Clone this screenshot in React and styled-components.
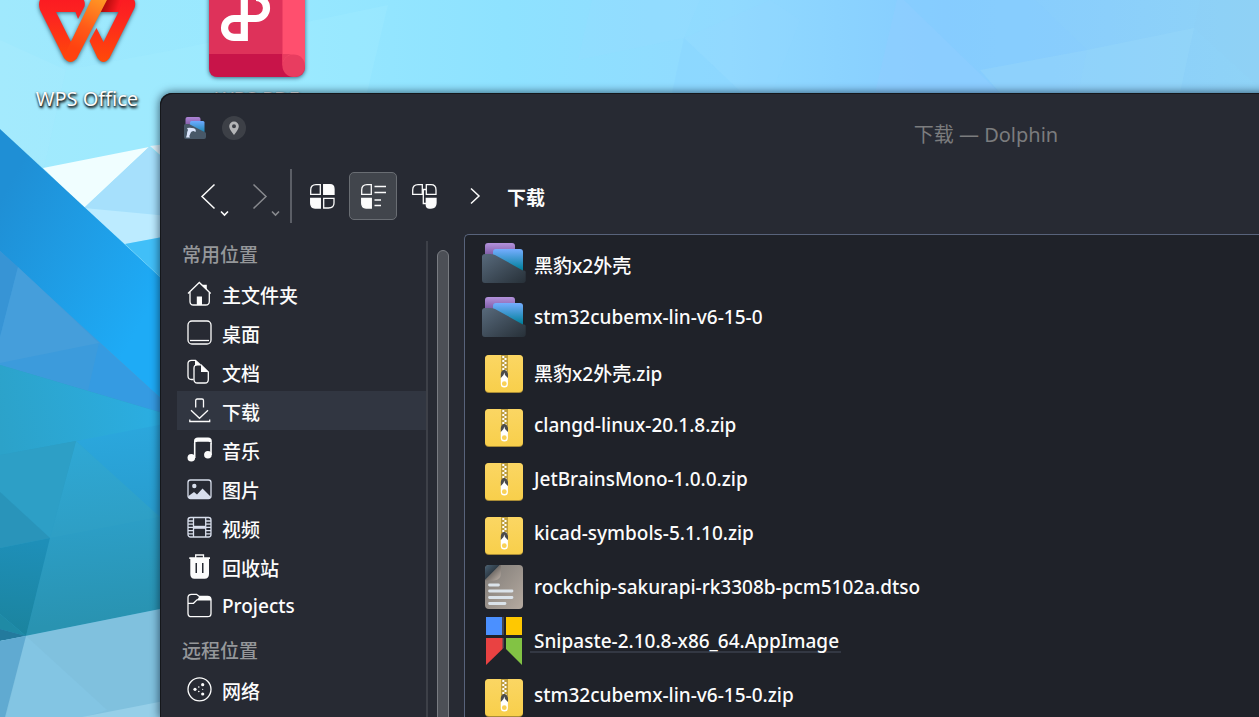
import React from "react";
import styled, { createGlobalStyle } from "styled-components";

const GlobalStyle = createGlobalStyle`
  *, *::before, *::after { box-sizing: border-box; }
  body {
    margin: 0;
    font-family: "Noto Sans", "Noto Sans CJK SC", sans-serif;
    font-size: 20px;
    line-height: 24px;
    color: #fcfcfc;
  }
  ul { list-style: none; margin: 0; padding: 0; }
  button { font: inherit; color: inherit; padding: 0; margin: 0; cursor: default; }
  svg { display: block; flex: none; }
`;

/* ---------- desktop ---------- */

const Desktop = styled.main`
  position: relative;
  height: 100vh;
  overflow: hidden;
  background: #8fdfff;
`;

const WallpaperArt = styled.svg`
  position: absolute;
  left: 0;
  top: 0;
`;

const Shortcuts = styled.ul`
  position: absolute;
  left: 2px;
  top: -20px;
  display: flex;
`;

const Shortcut = styled.li`
  width: 170px;
  display: flex;
  flex-direction: column;
  align-items: center;
  gap: 7px;
`;

const ShortcutArt = styled.svg`
  overflow: visible;
  filter: drop-shadow(0 1px 2px rgba(0, 40, 60, 0.65));
`;

const ShortcutLabel = styled.span`
  text-shadow: 1px 2px 3px #000, 0 1px 2px rgba(0, 0, 0, 0.8);
`;

/* ---------- window ---------- */

const Window = styled.section`
  position: absolute;
  left: 160px;
  top: 93px;
  right: -553px;
  bottom: 0;
  display: flex;
  flex-direction: column;
  background: #272a33;
  border-radius: 12px 0 0 0;
  box-shadow: inset 1px 1px 0 #15171b, 0 0 8px 1px rgba(0, 20, 40, 0.6);
`;

const TitleBar = styled.header`
  display: grid;
  grid-template-columns: 1fr auto 1fr;
  align-items: center;
  height: 70px;
  padding: 0 22px;
`;

const TitleIcons = styled.div`
  display: flex;
  align-items: center;
  gap: 16px;
`;

const Title = styled.h1`
  margin: 14px 0 0;
  font-size: 20px;
  font-weight: 400;
  color: #7b7c7e;
`;

const PinButton = styled.button`
  width: 24px;
  height: 24px;
  border: 0;
  border-radius: 50%;
  background: #3d4047;
  display: grid;
  place-items: center;
`;

const ToolBar = styled.div`
  display: flex;
  align-items: center;
  height: 66px;
  padding-left: 24px;
`;

const NavButton = styled.button`
  width: 51px;
  height: 48px;
  border: 0;
  background: none;
  opacity: ${(p) => (p.disabled ? 0.45 : 1)};
  &&& { color: #fcfcfc; }
`;

const Divider = styled.span`
  width: 2px;
  height: 54px;
  margin: 0 6px 0 4px;
  background: #5b5e66;
`;

const ViewModes = styled.div`
  display: flex;
  gap: 3px;
`;

const ViewButton = styled.button`
  width: 48px;
  height: 48px;
  display: grid;
  place-items: center;
  border: 1px solid ${(p) => (p.$active ? "#696d73" : "transparent")};
  border-radius: 5px;
  background: ${(p) => (p.$active ? "#41454c" : "none")};
`;

const Breadcrumb = styled.nav`
  display: flex;
  align-items: center;
  gap: 24px;
  padding: 2px 0 0 19px;
`;

const Crumb = styled.a`
  color: inherit;
  text-decoration: none;
  font-size: 19px;
  font-weight: 700;
  padding-top: 2px;
`;

const Body = styled.div`
  flex: 1;
  min-height: 0;
  display: flex;
  padding-top: 5px;
  font-size: 19px;
  font-weight: 500;
`;

/* ---------- places ---------- */

const Places = styled.nav`
  width: 266px;
  padding: 1px 0 0 17px;
  overflow: hidden;
`;

const PlacesGroup = styled.section`
  & + & { margin-top: 6px; }
`;

const PlacesHeading = styled.h2`
  margin: 0;
  padding: 0 5px;
  font-size: 19px;
  line-height: 40px;
  height: 39px;
  font-weight: 500;
  color: #95979a;
`;

const Place = styled.a`
  display: flex;
  align-items: center;
  gap: 9px;
  height: 39px;
  padding: 0 0 0 9px;
  color: #fcfcfc;
  text-decoration: none;
  background: ${(p) => (p.$current ? "#313641" : "none")};
`;

const PlaceLabel = styled.span`
  padding-top: ${(p) => (p.$latin ? 0 : 4)}px;
`;

const Gutter = styled.div`
  width: 38px;
  margin-top: 7px;
  padding: 9px 0 0 9px;
  border-left: 2px solid #3d4048;
  overflow: hidden;
`;

const ScrollThumb = styled.div`
  width: 12px;
  height: calc(100% + 20px);
  border: 1px solid #797c82;
  border-radius: 6px;
  background: #4c4f56;
`;

/* ---------- files ---------- */

const FilePanel = styled.div`
  flex: 1;
  overflow: hidden;
  padding: 1px 0 0 15px;
  background: #1f2229;
  border: 1px solid #58637b;
  border-right: 0;
  border-bottom: 0;
  border-radius: 5px 0 0 0;
`;

const FileRow = styled.li`
  display: flex;
  align-items: center;
  gap: 2px;
  height: 54px;
`;

const FileName = styled.span`
  line-height: 20px;
  padding: 0 2px 0 4px;
  border: solid transparent;
  border-width: 2px 0;
  border-bottom-color: ${(p) => (p.$marked ? "#333843" : "transparent")};
  margin-top: ${(p) => (p.$cjk ? 6 : 0)}px;
`;

/* ---------- drawings ---------- */

const Wallpaper = () => (
  <WallpaperArt width="1920" height="1080" viewBox="0 0 1920 1080" aria-hidden="true">
    <defs>
      <linearGradient id="sky" gradientUnits="userSpaceOnUse" x1="0" y1="0" x2="1259" y2="0">
        <stop offset="0" stopColor="#a0e9fd" />
        <stop offset="0.22" stopColor="#98e8ff" />
        <stop offset="0.4" stopColor="#8ee2ff" />
        <stop offset="0.58" stopColor="#91daff" />
        <stop offset="0.75" stopColor="#85ccff" />
        <stop offset="0.88" stopColor="#8bcffb" />
        <stop offset="1" stopColor="#8fd3f6" />
      </linearGradient>
      <linearGradient id="blue" gradientUnits="userSpaceOnUse" x1="0" y1="200" x2="160" y2="290">
        <stop offset="0" stopColor="#1f8fd5" />
        <stop offset="1" stopColor="#1eabf6" />
      </linearGradient>
      <linearGradient id="tealTop" gradientUnits="userSpaceOnUse" x1="0" y1="440" x2="160" y2="410">
        <stop offset="0" stopColor="#2ca2c9" />
        <stop offset="1" stopColor="#2baee2" />
      </linearGradient>
      <linearGradient id="tealRight" gradientUnits="userSpaceOnUse" x1="140" y1="425" x2="150" y2="510">
        <stop offset="0" stopColor="#2ba7dd" />
        <stop offset="1" stopColor="#289dcf" />
      </linearGradient>
      <linearGradient id="tealMid" gradientUnits="userSpaceOnUse" x1="80" y1="441" x2="90" y2="530">
        <stop offset="0" stopColor="#2fa8d5" />
        <stop offset="1" stopColor="#2e9fc5" />
      </linearGradient>
      <linearGradient id="tealLow" gradientUnits="userSpaceOnUse" x1="100" y1="525" x2="110" y2="620">
        <stop offset="0" stopColor="#2c9ec6" />
        <stop offset="1" stopColor="#2993b1" />
      </linearGradient>
      <linearGradient id="tealDark" gradientUnits="userSpaceOnUse" x1="30" y1="542" x2="20" y2="632">
        <stop offset="0" stopColor="#1e8fb8" />
        <stop offset="1" stopColor="#1b849f" />
      </linearGradient>
    </defs>
    <rect width="1920" height="1080" fill="url(#sky)" />
    <path d="M0 40 L0 129 L44 168 L66 70Z" fill="#fff" opacity=".05" />
    <path d="M66 70 L173 50 L388 5 L367 93 L160 145 L44 168Z" fill="#a8f0ff" opacity=".25" />
    <path d="M578 60 L592 0 L700 0 L684 38Z" fill="#9adaff" opacity=".2" />
    <path d="M684 38 L672 93 L742 93Z" fill="#84d2ff" opacity=".3" />
    <path d="M684 38 L770 0 L800 20 L772 93 L742 93Z" fill="#98d8ff" opacity=".2" />
    <path d="M897 0 L875 93 L1000 93 L904 0Z" fill="#90cdff" opacity=".6" />
    <path d="M904 0 L1000 93 L1078 93 L1087 50 L1035 0Z" fill="#86ccff" opacity=".4" />
    <path d="M980 70 L1087 50 L1194 28 L1180 93 L1000 93Z" fill="#9bdbfa" opacity=".35" />
    <path d="M1194 28 L1259 88 L1259 0 L1200 0Z" fill="#8ed0f4" opacity=".4" />

    <path d="M43 168 L149 147 L84 208Z" fill="#f0feff" />
    <path d="M149 147 L200 190 L200 220 L84 208Z" fill="#a6e0fc" />
    <path d="M150 146 L200 140 L200 190Z" fill="#e4f5fc" />
    <path d="M84 208 L200 219 L200 230 L125 244Z" fill="#bcebff" />
    <path d="M125 244 L200 230 L200 314Z" fill="#41bff8" />
    <path d="M0 240 L200 420 L200 450 L0 390Z" fill="#3c9bdc" />
    <path d="M0 129 L200 314 L200 434 L0 251Z" fill="url(#blue)" />
    <path d="M0 251 L18 267 L0 337Z" fill="#3794d5" />
    <path d="M18 267 L99 343 L0 363 L0 337Z" fill="#459edb" />
    <path d="M99 343 L200 434 L200 424 L88 391Z" fill="#359be2" />
    <path d="M0 365 L200 424 L200 640 L0 640Z" fill="#2c9ec6" />
    <path d="M0 365 L200 424 L76 441 L0 455Z" fill="url(#tealTop)" />
    <path d="M76 441 L200 417 L200 555Z" fill="url(#tealRight)" />
    <path d="M76 441 L160 517 L50 538Z" fill="url(#tealMid)" />
    <path d="M0 455 L76 441 L50 538 L0 492Z" fill="#2d9fc6" />
    <path d="M0 492 L50 538 L0 548Z" fill="#2994ba" />
    <path d="M50 538 L200 509 L200 601 L26 636Z" fill="url(#tealLow)" />
    <path d="M0 548 L50 538 L26 636 L0 614Z" fill="url(#tealDark)" />
    <path d="M0 614 L26 636 L0 629Z" fill="#1f8aa5" />
    <path d="M0 629 L26 636 L0 641Z" fill="#237a9d" />
    <path d="M0 641 L200 601 L200 800 L0 800Z" fill="#80c1de" />
    <path d="M26 636 L107 710 L76 720 L5 720Z" fill="#88caea" opacity=".4" />
    <path d="M0 641 L26 636 L5 717 L0 740Z" fill="#60aad1" />
    <path d="M82 717 L200 694 L200 760 L82 760Z" fill="#96cfe8" />
  </WallpaperArt>
);

const WpsLogo = () => (
  <ShortcutArt width="102" height="100" viewBox="36 -20 102 100" aria-hidden="true">
    <defs>
      <linearGradient id="wr" x1="0" y1="0" x2="0" y2="1">
        <stop offset="0" stopColor="#fb1a22" />
        <stop offset=".3" stopColor="#fd2420" />
        <stop offset="1" stopColor="#ff4a08" />
      </linearGradient>
      <linearGradient id="wo" gradientUnits="userSpaceOnUse" x1="100" y1="-4" x2="74" y2="48">
        <stop offset="0" stopColor="#ff9a25" />
        <stop offset=".6" stopColor="#ff5a18" />
        <stop offset="1" stopColor="#ff4210" />
      </linearGradient>
      <linearGradient id="wd" gradientUnits="userSpaceOnUse" x1="103" y1="3" x2="118" y2="8">
        <stop offset="0" stopColor="#a80909" />
        <stop offset="1" stopColor="#fc1b22" />
      </linearGradient>
    </defs>
    <path d="M43 -4 H80 Q86 0 84.500 6.500 L78 19 L75.500 12 H56 L71 42 L77 58 Q70.500 66 64 58 L40 10 Q37 1 43 -4Z" fill="url(#wr)" />
    <path d="M96.500 28 L103.500 42 L118.500 12 H100 L107 -4 H131 Q137 1 134.500 8 L109.500 58 Q103.500 66 97.500 58 L89.500 41Z" fill="url(#wr)" />
    <path d="M107 -4 H124 L118.500 12 H100Z" fill="url(#wd)" />
    <path d="M93 -4 H109 L77 58 Q73 62 70 59 L64 56Z" fill="url(#wo)" />
  </ShortcutArt>
);

const PdfLogo = () => (
  <ShortcutArt width="98" height="100" viewBox="208 -20 98 100" aria-hidden="true">
    <rect x="209" y="-19" width="96" height="96" rx="9" fill="#de325a" />
    <path d="M209 54 H294 V77 H218 Q209 77 209 68Z" fill="#c81449" />
    <path d="M282.500 -19 H296 Q305 -19 305 -10 V65.500 H282.500Z" fill="#ff4f6e" />
    <circle cx="293.700" cy="65.700" r="11.300" fill="#e83d60" />
    <path d="M282.500 54 H294 A11.300 11.300 0 0 0 282.500 65.700Z" fill="#e83d60" />
    <path d="M244.300 -15 V41 M244.300 18.500 H256 A10.500 10.500 0 0 0 256 -2.500 M244.300 18.500 H234 A9.400 9.400 0 0 0 234 37.400 H244.300" fill="none" stroke="#fff" strokeWidth="7.200" />
  </ShortcutArt>
);

const DolphinIcon = () => (
  <svg width="24" height="24" viewBox="0 0 24 24" aria-hidden="true">
    <defs>
      <linearGradient id="dp" x1="0" y1="0" x2="0" y2="1"><stop stopColor="#ad84d6" /><stop offset="1" stopColor="#77549c" /></linearGradient>
      <linearGradient id="db" x1="0" y1="0" x2="0" y2="1"><stop stopColor="#6eaaff" /><stop offset="1" stopColor="#007c99" /></linearGradient>
    </defs>
    <rect x="3.500" y="1" width="15" height="10" rx="2" fill="url(#dp)" />
    <rect x="8" y="5" width="14.500" height="15" rx="1.500" fill="url(#db)" />
    <path d="M2 9.500 Q2 8 3.500 8 L7 8 L22.500 16 Q24 16 24 17.500 V21 Q24 23 22 23 H4 Q2 23 2 21Z" fill="#485868" />
    <path d="M5 12 Q8 11.500 12 12.200 Q14.500 13.500 13.500 16 L11.500 15 Q9.500 15 8.800 16.500 L7.300 20 L8 21.500 H4 Q5 20 5.200 16 L6 14Z" fill="#dbe5fb" />
  </svg>
);

const Pin = () => (
  <svg width="12" height="16" viewBox="0 0 12 16" aria-hidden="true">
    <path fillRule="evenodd" fill="#b4b5b7" d="M6 1.500 A4.800 4.800 0 0 1 10.800 6.300 Q10.800 9.300 6 15 Q1.200 9.300 1.200 6.300 A4.800 4.800 0 0 1 6 1.500Z M6 4.300 a2 2 0 1 0 0 4 a2 2 0 1 0 0-4Z" />
  </svg>
);

const Arrow = ({ forward }) => (
  <svg width="51" height="48" viewBox="0 0 51 48" fill="none" stroke="currentColor" aria-hidden="true">
    <path d={forward ? "M18.500 12.500 L31 24.500 L18.500 36.500" : "M30.500 12.500 L18 24.500 L30.500 36.500"} strokeWidth="1.500" />
    <path d="M37 39.500 L40.500 43 L44 39.500" strokeWidth="1.600" />
  </svg>
);

const viewShapes = {
  icons: (
    <>
      <path d="M1.700 11.300 V7 Q1.700 1.700 7 1.700 H11.300 V11.300Z" />
      <path d="M14.700 1.700 H21 Q25 1.700 25 6 V11.300 H14.700Z" fill="currentColor" />
      <path d="M1.700 15.300 H11.300 V25 H6 Q1.700 25 1.700 20Z" fill="currentColor" />
      <path d="M14.700 15.300 H25 V20 Q25 25 19.500 25 H14.700Z" />
    </>
  ),
  details: (
    <>
      <path d="M1.700 11.300 V7 Q1.700 1.700 7 1.700 H11.300 V11.300Z" />
      <path d="M1.700 15.300 H11.300 V25 H6 Q1.700 25 1.700 20Z" fill="currentColor" />
      <path d="M14.500 3.500 H26 M14.500 9.500 H26 M14.500 17 H21 M14.500 22.500 H21" />
    </>
  ),
  tree: (
    <>
      <path d="M1.700 11.300 V7 Q1.700 1.700 7 1.700 H11.300 V11.300Z" />
      <path d="M15.300 1.700 H20 Q25 1.700 25 7 V11.300 H15.300Z" />
      <path d="M15.300 15.300 H25 V20 Q25 25 20 25 H18.500 Q15.300 25 15.300 22Z" fill="currentColor" />
      <path d="M11.300 6.500 H15.300 M12.300 6.500 V20.500 H15.300" />
    </>
  ),
};

const ViewIcon = ({ name }) => (
  <svg width="27" height="27" viewBox="0 0 27 27" fill="none" stroke="currentColor" strokeWidth="1.300" aria-hidden="true">
    {viewShapes[name]}
  </svg>
);

const placeShapes = {
  home: (
    <>
      <path d="M2 13.500 L13.300 2.500 L24.700 13.500 M4 12 V21.500 Q4 25 7.500 25 H19.500 Q23.300 25 23.300 21.500 V12" />
      <path d="M10.800 16.500 H16 V25 H10.800Z M16 4.700 H20.800 V10Z" fill="currentColor" stroke="none" />
    </>
  ),
  desktop: (
    <>
      <rect x="2" y="2" width="23" height="23" rx="4" />
      <path d="M4 21.500 H23" />
    </>
  ),
  documents: (
    <>
      <path d="M7.500 21.500 H5.500 Q2 21.500 2 18 V5.500 Q2 2.300 5.500 2.300 H9.500 L14 6.500" />
      <path d="M8 10 Q8 6.800 11.500 6.800 H15 L22.300 14 V21.500 Q22.300 25 19 25 H11.500 Q8 25 8 21.500Z" />
      <path d="M9 2 L14.500 7 H10 L9 8Z M15 6.500 L22.500 14 H15Z" fill="currentColor" stroke="none" />
    </>
  ),
  downloads: (
    <path d="M9.700 10.500 V3.500 Q9.700 2 11.200 2 H16 Q17.500 2 17.500 3.500 V10.500 M5 13.200 L13.500 21.300 L22 13.200 M3.800 22.500 V24.500 H23.700 V22.500" />
  ),
  music: (
    <>
      <path d="M8.700 22 V7 M25 19 V7" strokeWidth="1.600" />
      <path d="M8 9 V5 Q8 1.500 12 1.500 H22 Q25.800 1.500 25.800 5 V9 Q25 5.500 22 5.700 H12 Q9 5.500 8 9Z" fill="currentColor" stroke="none" />
      <circle cx="5.300" cy="21.800" r="3.800" fill="currentColor" stroke="none" />
      <circle cx="21.900" cy="18.800" r="3.800" fill="currentColor" stroke="none" />
    </>
  ),
  pictures: (
    <>
      <rect x="2" y="5" width="23" height="18.500" rx="2.500" />
      <circle cx="8.300" cy="11" r="2.200" fill="currentColor" stroke="none" />
      <path d="M2.500 23 V21 L8 17 L11 19.500 L16.500 13.500 L24.500 21.500 V23Z" fill="currentColor" stroke="none" />
    </>
  ),
  videos: (
    <>
      <rect x="2" y="3.500" width="23" height="19.500" rx="2.500" />
      <path d="M7.500 3.500 V23 M19.700 3.500 V23 M2 7 H7.500 M2 10.200 H7.500 M2 13.400 H7.500 M2 16.600 H7.500 M2 19.800 H7.500 M19.700 7 H25 M19.700 10.200 H25 M19.700 13.400 H25 M19.700 16.600 H25 M19.700 19.800 H25" />
      <path d="M7.500 13.300 H19.700" strokeWidth="3" />
    </>
  ),
  trash: (
    <>
      <path d="M9.700 5 V2 H17.500 V5" />
      <path d="M3.300 4.300 H24 V6 H23 V21 Q23 25.700 18.500 25.700 H8.500 Q4.300 25.700 4.300 21 V6 H3.300Z M9.500 10 V20 H11 V10Z M16 10 V20 H17.500 V10Z" fill="currentColor" fillRule="evenodd" stroke="none" />
    </>
  ),
  folder: (
    <>
      <path d="M2 5.500 Q2 2.300 5.500 2.300 H10.500 L13.500 4.500 H21.500 Q25 4.500 25 8 V21.500 Q25 24.700 21.500 24.700 H5.500 Q2 24.700 2 21.500Z M2 11.300 H7.500 L11 7.800 H25" />
      <path d="M13.500 4.300 H21.500 Q25 4.500 25.300 8 H11Z" fill="currentColor" stroke="none" />
    </>
  ),
  network: (
    <>
      <circle cx="13.500" cy="13.300" r="11.500" />
      <g fill="currentColor" stroke="none">
        <circle cx="9" cy="13.300" r="1.600" /><circle cx="16.700" cy="8.700" r="1.600" /><circle cx="16.700" cy="18" r="1.600" />
        <circle cx="12.800" cy="11" r=".8" /><circle cx="12.800" cy="15.500" r=".8" /><circle cx="16.700" cy="13.300" r=".6" />
      </g>
    </>
  ),
};

const PlaceIcon = ({ name }) => (
  <svg width="27" height="27" viewBox="0 0 27 27" fill="none" stroke="currentColor" strokeWidth="1.300"
    color={name === "pictures" || name === "videos" ? "#d8deec" : "#fcfcfc"} aria-hidden="true">
    {placeShapes[name]}
  </svg>
);

const fileShapes = {
  folder: (
    <>
      <rect x="5" y="4" width="30" height="20" rx="3" fill="url(#fp)" />
      <path d="M13 13 Q13 10 16 10 H40 Q43 10 43 13 V36 H13Z" fill="url(#fb)" />
      <path d="M2 18 Q2 15 5 15 H10 Q13 15 15 16 L41 30.500 Q42.500 31.500 44 31.500 Q45.700 31.500 45.700 33 V41 Q45.700 44 42.700 44 H5 Q2 44 2 41Z" fill="url(#fg)" />
    </>
  ),
  zip: (
    <>
      <rect x="5" y="8" width="38" height="38" rx="4" fill="#a98c36" />
      <rect x="5" y="8" width="38" height="37" rx="4" fill="url(#fz)" />
      <rect x="21" y="8" width="7" height="17" fill="#bf9f3c" />
      <path d="M23.300 9 V25" stroke="#fff" strokeWidth="2" strokeDasharray="2 2" />
      <path d="M25.500 11 V25" stroke="#fff" strokeWidth="2" strokeDasharray="2 2" />
      <path d="M20.800 31 V27 Q21 24 24.300 22.800 Q27.700 24 28 27 V31Z" fill="#4b4b4b" />
      <path d="M23.500 28 L24.300 25.500 L25 28 L27.900 31 V37 A3.500 3.500 0 0 1 20.800 37 V31Z" fill="#fff" />
      <circle cx="24.300" cy="36.700" r="2.400" fill="#f9d157" />
    </>
  ),
  text: (
    <>
      <rect x="5" y="2" width="38" height="44" rx="4" fill="url(#ft)" />
      <path d="M5 17 V6 Q5 2 9 2 H20Z" fill="url(#fc)" />
      <path d="M20 2 L5 17.500 H14 Q21 17 21 10 V2Z" fill="url(#fk)" />
      <path d="M9.500 22 H18.500 M9.500 28 H32 M9.500 34.500 H32 M9.500 40.500 H25" stroke="#dbe3ea" strokeWidth="2.800" strokeLinecap="round" />
    </>
  ),
  snipaste: (
    <>
      <path d="M6 0 H22 V18 H6Z" fill="#4b90ff" />
      <path d="M26 0 H42 V18 H26Z" fill="#ffc801" />
      <path d="M22 0 H24 V18 H22Z M22 21 H24 V31 L22 32Z" fill="#45454c" />
      <path d="M6 21 H22.500 V32 L6 48Z" fill="#e94242" />
      <path d="M26 21 H42 V48 L26 32Z" fill="#82c344" />
    </>
  ),
};

const FileIcon = ({ name }) => (
  <svg width="48" height="48" viewBox="0 0 48 48" aria-hidden="true">{fileShapes[name]}</svg>
);

const GradientDefs = styled.svg`
  position: absolute;
`;

const FileGradients = () => (
  <GradientDefs width="0" height="0" aria-hidden="true">
    <defs>
      <linearGradient id="fp" x1="0" y1="0" x2="0" y2="1"><stop stopColor="#b392dc" /><stop offset=".7" stopColor="#74529b" /></linearGradient>
      <linearGradient id="fb" x1="0" y1="0" x2="0" y2="1"><stop stopColor="#75adff" /><stop offset=".8" stopColor="#00809b" /></linearGradient>
      <linearGradient id="fg" x1="0" y1="0" x2="1" y2="1"><stop stopColor="#586a7c" /><stop offset="1" stopColor="#273038" /></linearGradient>
      <linearGradient id="fz" x1="0" y1="0" x2="0" y2="1"><stop stopColor="#fbd663" /><stop offset="1" stopColor="#f8cf4b" /></linearGradient>
      <linearGradient id="ft" x1="0" y1="0" x2="1" y2="1"><stop stopColor="#7e7a76" /><stop offset="1" stopColor="#b5aaa0" /></linearGradient>
      <linearGradient id="fc" x1="0" y1="0" x2="1" y2="1"><stop stopColor="#486174" /><stop offset=".6" stopColor="#29323b" /></linearGradient>
      <linearGradient id="fk" x1="0.300" y1="0.300" x2="1" y2="1"><stop stopColor="#5a5552" /><stop offset="1" stopColor="#c2b6ac" /></linearGradient>
    </defs>
  </GradientDefs>
);

/* ---------- data ---------- */

const placeGroups = [
  {
    heading: "常用位置",
    items: [
      { icon: "home", label: "主文件夹" },
      { icon: "desktop", label: "桌面" },
      { icon: "documents", label: "文档" },
      { icon: "downloads", label: "下载", current: true },
      { icon: "music", label: "音乐" },
      { icon: "pictures", label: "图片" },
      { icon: "videos", label: "视频" },
      { icon: "trash", label: "回收站" },
      { icon: "folder", label: "Projects", latin: true },
    ],
  },
  { heading: "远程位置", items: [{ icon: "network", label: "网络" }] },
];

const files = [
  { icon: "folder", name: "黑豹x2外壳", cjk: true },
  { icon: "folder", name: "stm32cubemx-lin-v6-15-0" },
  { icon: "zip", name: "黑豹x2外壳.zip", cjk: true },
  { icon: "zip", name: "clangd-linux-20.1.8.zip" },
  { icon: "zip", name: "JetBrainsMono-1.0.0.zip" },
  { icon: "zip", name: "kicad-symbols-5.1.10.zip" },
  { icon: "text", name: "rockchip-sakurapi-rk3308b-pcm5102a.dtso" },
  { icon: "snipaste", name: "Snipaste-2.10.8-x86_64.AppImage", marked: true },
  { icon: "zip", name: "stm32cubemx-lin-v6-15-0.zip" },
];

export default function App() {
  return (
    <Desktop>
      <GlobalStyle />
      <FileGradients />
      <Wallpaper />
      <Shortcuts>
        <Shortcut><WpsLogo /><ShortcutLabel>WPS Office</ShortcutLabel></Shortcut>
        <Shortcut><PdfLogo /><ShortcutLabel>WPS PDF</ShortcutLabel></Shortcut>
      </Shortcuts>
      <Window>
        <TitleBar>
          <TitleIcons>
            <DolphinIcon />
            <PinButton aria-label="Pin"><Pin /></PinButton>
          </TitleIcons>
          <Title>下载 — Dolphin</Title>
        </TitleBar>
        <ToolBar>
          <NavButton aria-label="Back"><Arrow /></NavButton>
          <NavButton aria-label="Forward" disabled><Arrow forward /></NavButton>
          <Divider />
          <ViewModes>
            <ViewButton aria-label="Icons"><ViewIcon name="icons" /></ViewButton>
            <ViewButton aria-label="Compact" aria-pressed="true" $active><ViewIcon name="details" /></ViewButton>
            <ViewButton aria-label="Details"><ViewIcon name="tree" /></ViewButton>
          </ViewModes>
          <Breadcrumb>
            <svg width="16" height="20" viewBox="0 0 16 20" fill="none" stroke="currentColor" strokeWidth="1.500" aria-hidden="true">
              <path d="M4 1.500 L12 9 L4 16.500" />
            </svg>
            <Crumb href="#downloads">下载</Crumb>
          </Breadcrumb>
        </ToolBar>
        <Body>
          <Places>
            {placeGroups.map((g) => (
              <PlacesGroup key={g.heading}>
                <PlacesHeading>{g.heading}</PlacesHeading>
                <ul>
                  {g.items.map((p) => (
                    <li key={p.label}>
                      <Place href={`#${p.icon}`} $current={p.current}>
                        <PlaceIcon name={p.icon} />
                        <PlaceLabel $latin={p.latin}>{p.label}</PlaceLabel>
                      </Place>
                    </li>
                  ))}
                </ul>
              </PlacesGroup>
            ))}
          </Places>
          <Gutter><ScrollThumb /></Gutter>
          <FilePanel>
            <ul>
              {files.map((f) => (
                <FileRow key={f.name}>
                  <FileIcon name={f.icon} />
                  <FileName $cjk={f.cjk} $marked={f.marked}>{f.name}</FileName>
                </FileRow>
              ))}
            </ul>
          </FilePanel>
        </Body>
      </Window>
    </Desktop>
  );
}
